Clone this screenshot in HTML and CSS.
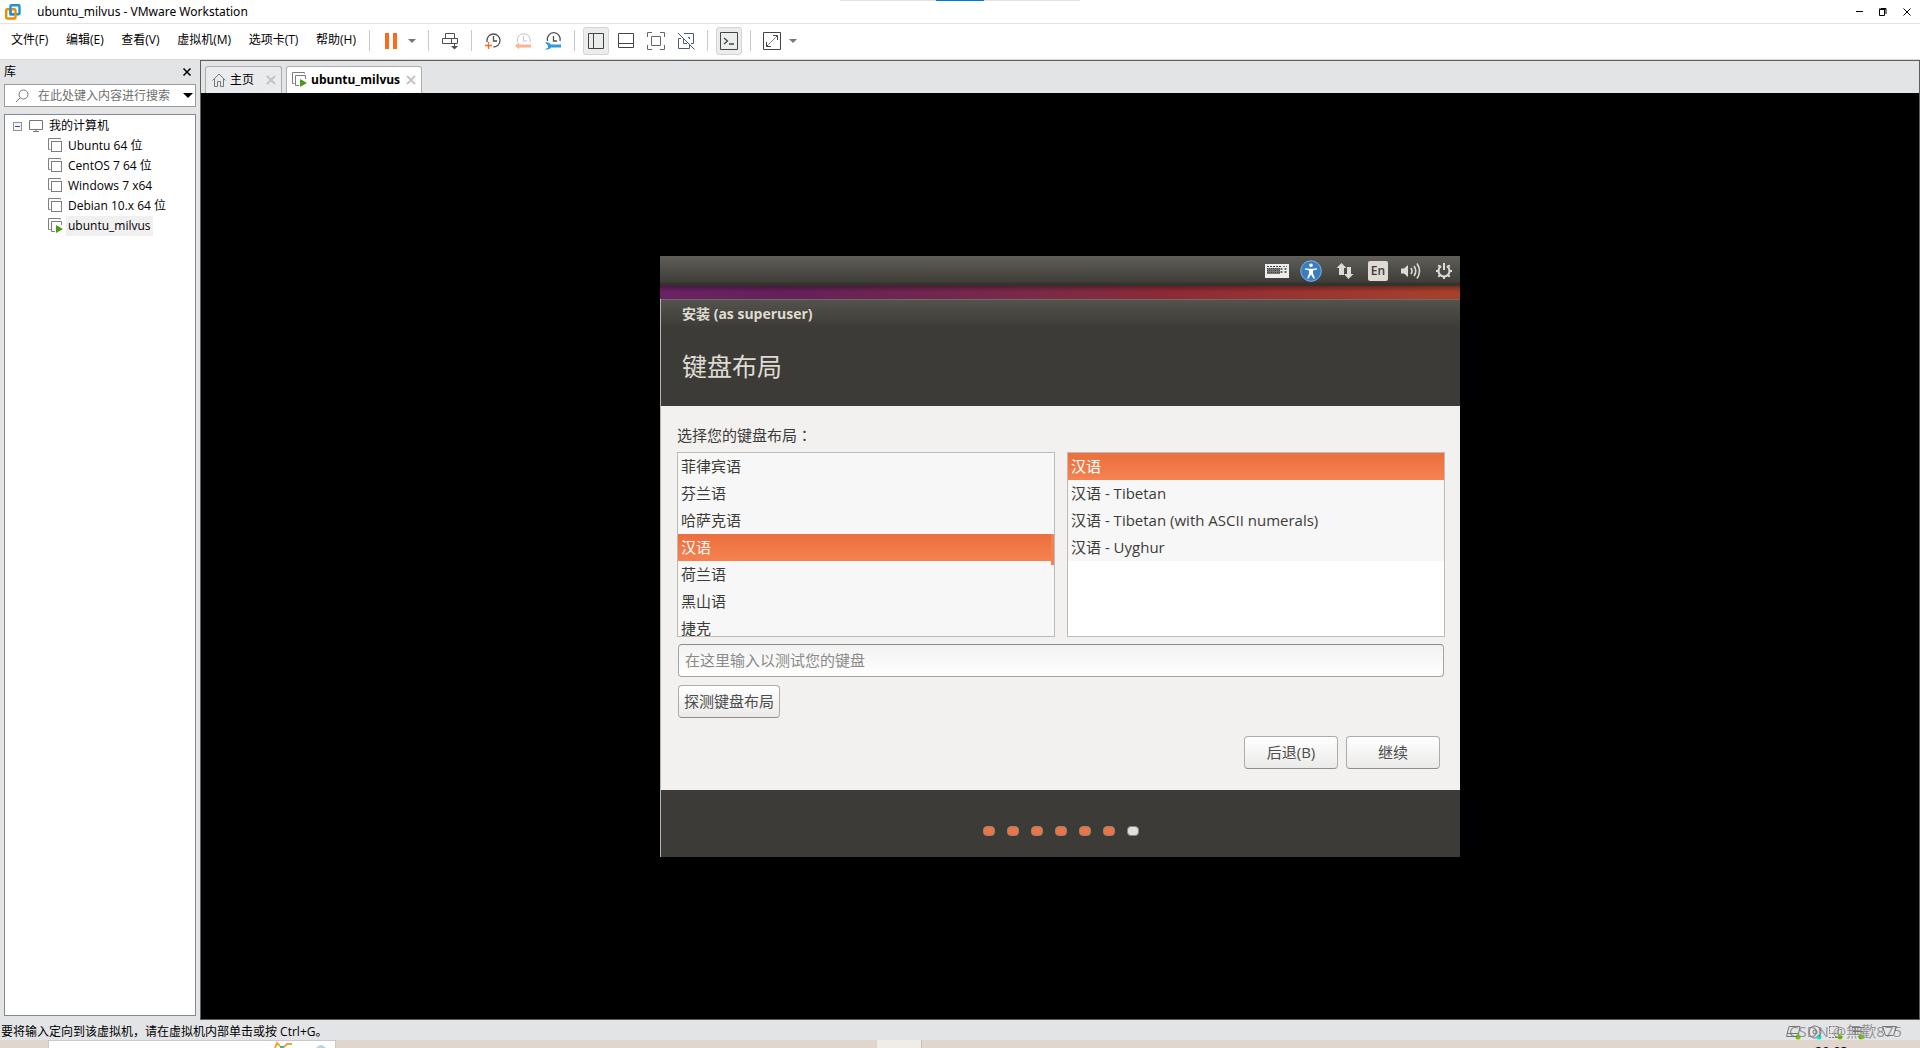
FILE: index.html
```html
<!DOCTYPE html>
<html lang="zh-CN">
<head>
<meta charset="utf-8">
<title>ubuntu_milvus - VMware Workstation</title>
<link rel="stylesheet" href="styles.css">
</head>
<body>
<svg class="defs" aria-hidden="true">
  <symbol id="vm" viewBox="0 0 16 16"><path d="M12.500 1.500V.5H.5v11h2" fill="none" stroke="#7d7d7d"/><rect x="3.500" y="3.500" width="10" height="10" fill="#fff" stroke="#7d7d7d"/></symbol>
  <symbol id="vm-on" viewBox="0 0 16 16"><path d="M12.500 1.500V.5H.5v11h2M7 13.500H3.500v-10h10V7" fill="none" stroke="#7d7d7d"/><path d="M8 7l7 4-7 4z" fill="#4a9c12"/></symbol>
  <symbol id="cross" viewBox="0 0 10 10"><path d="M1 1l8 8M9 1L1 9" fill="none" stroke="currentColor" stroke-width="2"/></symbol>
  <symbol id="clock" viewBox="0 0 18 18"><path d="M3 10V8.500a6.500 6.500 0 1 1 6.500 6.500M9.500 4v5H13" fill="none" stroke="currentColor" stroke-width="1.300"/></symbol>
</svg>
<div class="app">
  <div class="snap"><i></i></div>
  <header class="titlebar">
    <svg class="logo" viewBox="0 0 16 16"><rect x="5.500" y="1.200" width="9" height="9" rx="1" fill="none" stroke="#1a94d2" stroke-width="2.400"/><rect x="1.200" y="5.200" width="9.300" height="9.300" rx="1" fill="none" stroke="#f38b00" stroke-width="2.400"/><path d="M5.500 4v6.200H9" fill="none" stroke="#1a94d2" stroke-width="2.400"/></svg>
    <h1>ubuntu_milvus - VMware Workstation</h1>
    <button aria-label="最小化"><svg viewBox="0 0 10 10"><path d="M2 4.500h7" stroke="#000" fill="none"/></svg></button>
    <button aria-label="还原"><svg viewBox="0 0 10 10"><path d="M1.500 2.500h5v6h-5zM3 1.500h5V7" stroke="#000" fill="none"/><path d="M1 2h7" stroke="#000"/></svg></button>
    <button aria-label="关闭"><svg viewBox="0 0 10 10"><path d="M1.500 1.500l7 7M8.500 1.500l-7 7" stroke="#000" fill="none"/></svg></button>
  </header>

  <div class="menubar">
    <nav class="menus">
      <button>文件(F)</button><button>编辑(E)</button><button>查看(V)</button><button>虚拟机(M)</button><button>选项卡(T)</button><button>帮助(H)</button>
    </nav>
    <i class="sep"></i>
    <div class="tools">
      <button class="tool" aria-label="挂起"><svg viewBox="0 0 18 18"><path d="M3 1h4v16H3zM11 1h4v16h-4z" fill="#ff6a1a"/></svg></button><button class="drop" aria-label="电源选项"></button>
    </div>
    <i class="sep"></i>
    <button class="tool" aria-label="发送 Ctrl+Alt+Del"><svg viewBox="0 0 18 18"><path d="M4.500 1.500h9v5h-9zM1.500 6.500h15v5h-15zM10.500 6.500v5M13.500 11.500v4" fill="none" stroke="#4f4f4f"/><path d="M10 14h7l-3.500 3.500z" fill="#4f4f4f"/></svg></button>
    <i class="sep"></i>
    <div class="tools gap">
      <button class="tool" aria-label="拍摄快照"><svg viewBox="0 0 18 18" color="#4f4f4f"><use href="#clock"/><path d="M4.500 10v7M1 13.500h7" stroke="#ff6a1a" stroke-width="1.300"/></svg></button>
      <button class="tool" aria-label="恢复快照"><svg viewBox="0 0 18 18"><path d="M3.500 10a6.500 6.500 0 1 1 12.500 0M9.500 4v5H13" fill="none" stroke="#c2c2c2"/><path d="M1 13.500l4-3v2h12v3H5v2z" fill="#ffb48f"/></svg></button>
      <button class="tool" aria-label="管理快照"><svg viewBox="0 0 18 18"><path d="M3.500 9a6.500 6.500 0 1 1 12.500 0M9.500 4v5H13" fill="none" stroke="#4f4f4f" stroke-width="1.300"/><path d="M1 10.500q4-1 6 2h10v3H7q-2 3-6 1.500l3-1v-2.500z" fill="#2d9be0"/></svg></button>
    </div>
    <i class="sep"></i>
    <div class="tools gap">
      <button class="tool on" aria-label="显示库"><svg viewBox="0 0 18 18"><path d="M1.500 1.500h15v15h-15zM6.500 1.500v15" fill="none" stroke="#444"/></svg></button>
      <button class="tool" aria-label="显示缩略图"><svg viewBox="0 0 18 18"><path d="M1.500 1.500h15v14h-15zM1.500 11.500h15" fill="none" stroke="#444"/></svg></button>
      <button class="tool" aria-label="全屏"><svg viewBox="0 0 18 18"><path d="M.5 5V.5H5M13 .5h4.500V5M17.500 13v4.500H13M5 17.500H.5V13M4.500 4.500h9v9h-9z" fill="none" stroke="#666"/></svg></button>
      <button class="tool" aria-label="Unity"><svg viewBox="0 0 18 18"><path d="M7 1.500h9.500v10H14M11 5.500h1.500V7M12.500 13v3.500h-11v-10H4M6.500 6v5.500H10M1 1l16.500 16.500" fill="none" stroke="#4c5d6e"/></svg></button>
    </div>
    <i class="sep"></i>
    <button class="tool on" aria-label="控制台"><svg viewBox="0 0 18 18"><path d="M.5.5h17v17H.5z" fill="none" stroke="#444"/><path d="M4 6l3.500 3L4 12M9 12h5" fill="none" stroke="#444" stroke-width="1.300"/></svg></button>
    <i class="sep"></i>
    <div class="tools">
      <button class="tool" aria-label="自由拉伸"><svg viewBox="0 0 18 18"><path d="M.5.5h17v17H.5zM10 3.500h4.500V8M3.500 10v4.500H8" fill="none" stroke="#444"/><path d="M4 14L14 4" stroke="#444" stroke-dasharray="2 1"/></svg></button><button class="drop" aria-label="拉伸选项"></button>
    </div>
  </div>

  <div class="main">
    <aside class="library">
      <div class="lib-head"><h2>库</h2><button aria-label="关闭库"><svg viewBox="0 0 10 10"><path d="M1.500 1.500l7 7M8.500 1.500l-7 7" stroke="#000" stroke-width="1.500"/></svg></button></div>
      <div class="search">
        <svg viewBox="0 0 14 14"><circle cx="8.500" cy="5.500" r="4.500" fill="none" stroke="#777"/><path d="M5 9l-4 4" stroke="#777"/></svg>
        <input type="text" aria-label="搜索" placeholder="在此处键入内容进行搜索">
        <button aria-label="搜索选项"></button>
      </div>
      <ul class="tree">
        <li class="root">
          <svg class="fold" viewBox="0 0 9 9"><rect x=".5" y=".5" width="8" height="8" fill="#f4f4f4" stroke="#929292"/><path d="M2 4.500h5" stroke="#2b4c9c"/></svg>
          <svg class="pc" viewBox="0 0 14 12"><path d="M.5.500h13v9H.5zM4 11.500h6M7 9v2" fill="none" stroke="#777"/></svg>
          <span>我的计算机</span></li>
        <li><svg><use href="#vm"/></svg><span>Ubuntu 64 位</span></li>
        <li><svg><use href="#vm"/></svg><span>CentOS 7 64 位</span></li>
        <li><svg><use href="#vm"/></svg><span>Windows 7 x64</span></li>
        <li><svg><use href="#vm"/></svg><span>Debian 10.x 64 位</span></li>
        <li><svg><use href="#vm-on"/></svg><span class="current">ubuntu_milvus</span></li>
      </ul>
    </aside>

    <section class="work">
      <div class="tabs">
        <div class="tab"><svg viewBox="0 0 16 16"><path d="M1.500 8.500L8 2l6.500 6.500M3.500 7v7.500h3V9.500h3v5h3V7" fill="none" stroke="#777"/></svg><span>主页</span><button aria-label="关闭标签"><svg><use href="#cross"/></svg></button></div>
        <div class="tab active"><svg><use href="#vm-on"/></svg><span>ubuntu_milvus</span><button aria-label="关闭标签"><svg><use href="#cross"/></svg></button></div>
      </div>
      <div class="stage">
        <div class="guest">
          <div class="panel">
            <svg class="kbd" viewBox="0 0 24 14"><rect width="24" height="14" fill="#ececec"/><path d="M2 2.500h14" stroke="#444" stroke-dasharray="2 1"/><path d="M18 2.500h4" stroke="#3c9a3c" stroke-dasharray="2 1"/><path d="M2 4h13v6H2z" fill="#777"/><path d="M2 4.500h13M2 6.500h13M2 8.500h13" stroke="#444" stroke-dasharray="1 1"/><path d="M16.500 4v6M20.500 4v6" stroke="#666" stroke-width="2" stroke-dasharray="2 1"/></svg>
            <svg class="a11y" viewBox="0 0 22 22"><circle cx="11" cy="11" r="10.300" fill="#3a7dc0" stroke="#7fb0e0"/><circle cx="11" cy="5.300" r="1.800" fill="#fff"/><path d="M5 8.200l4 .6h4l4-.6v1.300l-4 1v3l2 5h-1.500L11 14.500 8.500 18.500H7l2-5v-3l-4-1z" fill="#fff"/></svg>
            <svg class="net" viewBox="0 0 18 18"><path d="M5.500 1l5 5H8v7H3V6H.5zM12.500 17l5-5H15V5h-4v7H8z" fill="#dfdbd2"/></svg>
            <span class="lang">En</span>
            <svg class="vol" viewBox="0 0 20 18"><path d="M0 6.500h3L7 3v12l-4-3.500H0z" fill="#dfdbd2"/><path d="M10 6q2 3 0 6M13 4q3.500 5 0 10M16 1.500q5 7.500 0 15" fill="none" stroke="#dfdbd2" stroke-width="1.600"/></svg>
            <svg class="gear" viewBox="0 0 18 18"><path d="M6.200 4.200a5.500 5.500 0 1 0 5.600 0" fill="none" stroke="#dfdbd2" stroke-width="2"/><path d="M9 1v7M1 9h2M15 9h2M9 15v2M3.300 3.300l1.600 1.600M14.700 3.300l-1.600 1.600M3.300 14.700l1.600-1.600M14.700 14.700l-1.600-1.600" stroke="#dfdbd2" stroke-width="2"/></svg>
          </div>
          <div class="wall"></div>
          <div class="installer">
            <div class="head"><p>安装 (as superuser)</p><h2>键盘布局</h2></div>
            <form class="body" onsubmit="return false">
              <p class="prompt">选择您的键盘布局<span lang="zh-TW">：</span></p>
              <div class="lists">
                <ul class="list long"><li>菲律宾语</li><li>芬兰语</li><li>哈萨克语</li><li class="sel">汉语</li><li>荷兰语</li><li>黑山语</li><li>捷克</li></ul>
                <ul class="list"><li class="sel">汉语</li><li>汉语 - Tibetan</li><li>汉语 - Tibetan (with ASCII numerals)</li><li>汉语 - Uyghur</li></ul>
              </div>
              <input class="test" type="text" aria-label="测试键盘" placeholder="在这里输入以测试您的键盘">
              <button class="btn detect">探测键盘布局</button>
              <div class="actions"><button class="btn">后退(B)</button><button class="btn">继续</button></div>
            </form>
            <div class="dots"><i></i><i></i><i></i><i></i><i></i><i></i><i class="todo"></i></div>
          </div>
        </div>
      </div>
    </section>
  </div>

  <footer class="status">
    <p>要将输入定向到该虚拟机，请在虚拟机内部单击或按 Ctrl+G。</p>
    <div class="devices">
      <svg viewBox="0 0 120 16"><g fill="none" stroke="#777"><path d="M4 2.500h11l-2 10H1.500zM2 9.500h12"/><circle cx="30" cy="8" r="6"/><circle cx="30" cy="8" r="2"/><path d="M44.500 2.500h9v7h-9zM44 13.500h12" stroke-dasharray="2 1"/><path d="M67 3.500h12M68 7.500h10M70 3v8M76 3v8M97.500 2.500h14l-3 9h-8z"/></g><circle cx="13" cy="13" r="2.500" fill="#73c400"/><circle cx="34" cy="13" r="2.500" fill="#20dcc4"/><circle cx="55" cy="13" r="2.500" fill="#73c400"/><circle cx="76" cy="13" r="2.500" fill="#73c400"/></svg>
      <span class="mark">CSDN @無歡875</span>
    </div>
  </footer>
  <div class="taskbar">
    <div class="tasksearch"><svg viewBox="0 0 60 7"><path d="M1 7l2-5 3 3M10 6l3-3h5" stroke="#f0a43a" stroke-width="2" fill="none"/><path d="M6 6h4" stroke="#3fb39a" stroke-width="2"/><path d="M42 7q5-6 10 0z" fill="#b9d3e2"/></svg></div>
    <div class="taskapp"></div>
    <time>20:03</time>
  </div>
</div>
</body>
</html>
```
FILE: styles.css
```css
* { box-sizing: border-box; }
body, h1, h2, p, ul { margin: 0; padding: 0; font-weight: normal; }
ul { list-style: none; }
body { font: 12px/20px "Open Sans", "Noto Sans CJK SC", sans-serif; color: #000; }
button { font: inherit; color: inherit; border: 0; background: none; padding: 0; margin: 0; }
input { font: inherit; border: 0; background: none; padding: 0; min-width: 0; }
svg { display: block; flex: none; }
.defs { position: absolute; width: 0; height: 0; }

.app { position: relative; display: flex; flex-direction: column; height: 100vh; overflow: hidden; background: #e3e4e6; }

/* Window frame */
.snap { position: absolute; top: 0; left: 840px; width: 240px; height: 1px; background: #e3e3e3; }
.snap i { display: block; width: 48px; height: 1px; margin: 0 auto; background: #0078d7; }
.titlebar { display: flex; align-items: center; height: 24px; flex: none; padding: 0 8px 0 5px; background: #fff; border-bottom: 1px solid #e3e3e3; }
.logo { width: 16px; height: 16px; margin-right: 16px; }
.titlebar h1 { flex: 1; font-family: "Noto Sans", "Noto Sans CJK SC", sans-serif; font-size: 12px; line-height: 20px; }
.titlebar button { width: 10px; margin-left: 14px; }
.titlebar button svg { width: 10px; height: 10px; }

/* Menu and tool bar */
.menubar { display: flex; align-items: center; height: 36px; flex: none; padding-bottom: 2px; background: #fff; border-bottom: 1px solid #dadada; }
.menus { display: flex; justify-content: space-between; flex: 0 0 361px; padding: 0 5px 2px 11px; white-space: nowrap; }
.sep { flex: none; width: 1px; height: 21px; margin: 0 8px; background: #c8c8c8; }
.tools { display: flex; }
.gap { gap: 4px; }
.tool { display: grid; place-items: center; width: 26px; height: 28px; border: 1px solid transparent; border-radius: 3px; flex: none; }
.tool svg { width: 18px; height: 18px; }
.tool.on { background: #ebecec; border-color: #d4d4d4; }
.drop { display: grid; place-items: center; width: 16px; flex: none; }
.drop::after { content: ""; border: 4px solid transparent; border-top-color: #777; border-bottom: 0; }

.main { display: flex; flex: 1; min-height: 0; }

/* Library */
.library { display: flex; flex-direction: column; width: 200px; flex: none; padding: 0 4px 4px; background: #e3e4e6; }
.lib-head { display: flex; align-items: center; justify-content: space-between; height: 24px; padding: 0 4px 0 0; }
.lib-head h2 { font-size: 12px; }
.lib-head svg { width: 10px; height: 10px; }
.search { display: flex; align-items: center; height: 23px; margin-bottom: 7px; padding: 0 2px 0 10px; background: #fff; border: 1px solid #9a9a9a; }
.search svg { width: 14px; height: 14px; margin-right: 9px; }
.search input { flex: 1; }
.search input::placeholder { color: #6d6d6d; opacity: 1; }
.search button::after { content: ""; display: block; border: 5px solid transparent; border-top-color: #000; border-bottom: 0; }
.tree { flex: 1; padding-top: 1px; background: #fff; border: 1px solid #828790; }
.tree li { display: flex; align-items: center; height: 20px; padding-left: 43px; }
.tree li svg { width: 16px; height: 16px; margin-right: 2px; }
.tree span { padding: 0 2px; }
.tree .current { background: #f0f0f0; }
.tree .root { padding-left: 8px; }
.tree .root .fold { width: 9px; height: 9px; margin-right: 7px; }
.tree .root .pc { width: 14px; height: 12px; margin-right: 4px; }

/* Work area */
.work { display: flex; flex-direction: column; flex: 1; min-width: 0; border: 1px solid #5d5d5d; }
.tabs { display: flex; gap: 4px; height: 32px; flex: none; padding: 5px 0 0 4px; }
.tab { display: flex; align-items: center; padding: 0 5px; border: 1px solid #adadad; border-bottom: 0; border-radius: 3px 3px 0 0; background: #eaebec; }
.tab.active { background: #fff; font-weight: bold; }
.tab > svg { width: 16px; height: 16px; margin-right: 3px; }
.tab button { margin-left: 12px; color: #c4c4c4; }
.tab.active button { margin-left: 6px; }
.tab button svg { width: 10px; height: 10px; }
.stage { display: flex; flex: 1; align-items: center; justify-content: center; background: #000; min-height: 0; }

/* Guest desktop */
.guest { width: 800px; font: 15px/27px "Open Sans", "Noto Sans CJK SC", sans-serif; color: #3c3b37; }
.panel { display: flex; align-items: center; justify-content: flex-end; height: 30px; padding: 0 7px; background: linear-gradient(#5f5e59, #3f3e39 85%, #33322d 92%); }
.kbd { width: 24px; height: 14px; }
.a11y { width: 22px; height: 22px; margin-left: 11px; }
.net { width: 18px; height: 18px; margin-left: 14px; }
.lang { width: 20px; margin-left: 14px; border-radius: 2px; background: #dfdbd2; font-size: 12px; font-weight: 600; line-height: 20px; text-align: center; }
.vol { width: 20px; height: 18px; margin-left: 13px; }
.gear { width: 18px; height: 18px; margin-left: 14px; }
.wall { height: 13px; background: linear-gradient(rgba(0, 0, 0, .3), transparent 6px), linear-gradient(90deg, #6b2264, #65205a 15%, #7e2b45 50%, #8e2b35 65%, #a8412b); }
.installer { border-left: 1px solid #b5b5b0; }
.head { height: 107px; padding: 0 20px 0 21px; background: linear-gradient(#53524c, #3c3b37 28px); border-top: 1px solid #6d6c66; color: #dfdbd2; }
.head p { font-weight: bold; font-size: 14px; line-height: 28px; }
.head h2 { font-size: 25px; line-height: 32px; margin-top: 22px; }
.body { display: flex; flex-direction: column; padding: 15px 15px 21px 16px; background: #f2f1f0; }
.prompt { margin-bottom: 3px; }
.prompt span { font-family: "Noto Sans CJK TC", sans-serif; }
.lists { display: grid; grid-template-columns: 1fr 1fr; gap: 12px; }
.list { height: 185px; overflow: hidden; background: #fff; border: 1px solid #bdbbb7; }
.list li { padding-left: 3px; background: #f7f7f7; }
.list .sel { color: #fff; background: linear-gradient(#ea6f3c, #f68252); }
.long .sel { position: relative; }
.long .sel::after { content: ""; position: absolute; right: 0; top: 0; width: 3px; height: 31px; background: #f4824f; }
.test { height: 33px; margin: 7px 1px 8px; padding: 0 6px; border: 1px solid #a3a3a0; border-top-color: #8b8b89; border-radius: 4px; background: linear-gradient(#f2f2f2, #fff); }
.test::placeholder { color: #8a8a88; opacity: 1; }
.btn { width: 94px; height: 33px; border: 1px solid #aeaca8; border-bottom-color: #908e8a; border-radius: 4px; background: linear-gradient(#fff, #ebeae9); color: #4c4c4c; }
.detect { width: 102px; margin-left: 1px; }
.actions { display: flex; justify-content: flex-end; gap: 8px; margin-top: 18px; padding-right: 5px; }
.dots { display: flex; justify-content: center; align-items: center; gap: 12px; height: 67px; padding-top: 16px; background: #3c3b37; }
.dots i { width: 12px; height: 10px; border: 1px solid #8d8680; border-radius: 4px; background: #ee7443; }
.dots .todo { background: #e0e0e0; }

/* Status line and the strip of desktop task bar */
.status { display: flex; align-items: center; justify-content: space-between; height: 20px; flex: none; padding: 4px 15px 0 1px; }
.devices { position: relative; width: 120px; height: 16px; }
.devices svg { width: 120px; height: 16px; }
.mark { position: absolute; left: 4px; top: -3px; white-space: nowrap; font-size: 15px; line-height: 20px; color: rgba(110, 110, 110, .7); }
.taskbar { display: flex; height: 8px; flex: none; padding-left: 48px; background: #e0d6cd; overflow: hidden; }
.tasksearch { width: 288px; background: #fff; border: 1px solid #c9c9c9; border-bottom: 0; padding-left: 225px; }
.tasksearch svg { width: 60px; height: 7px; }
.taskapp { width: 45px; margin-left: 541px; background: #f0ece7; border-right: 1px solid #cbbfb5; }
.taskbar time { margin: 1px 72px 0 auto; font-size: 13px; }
```
